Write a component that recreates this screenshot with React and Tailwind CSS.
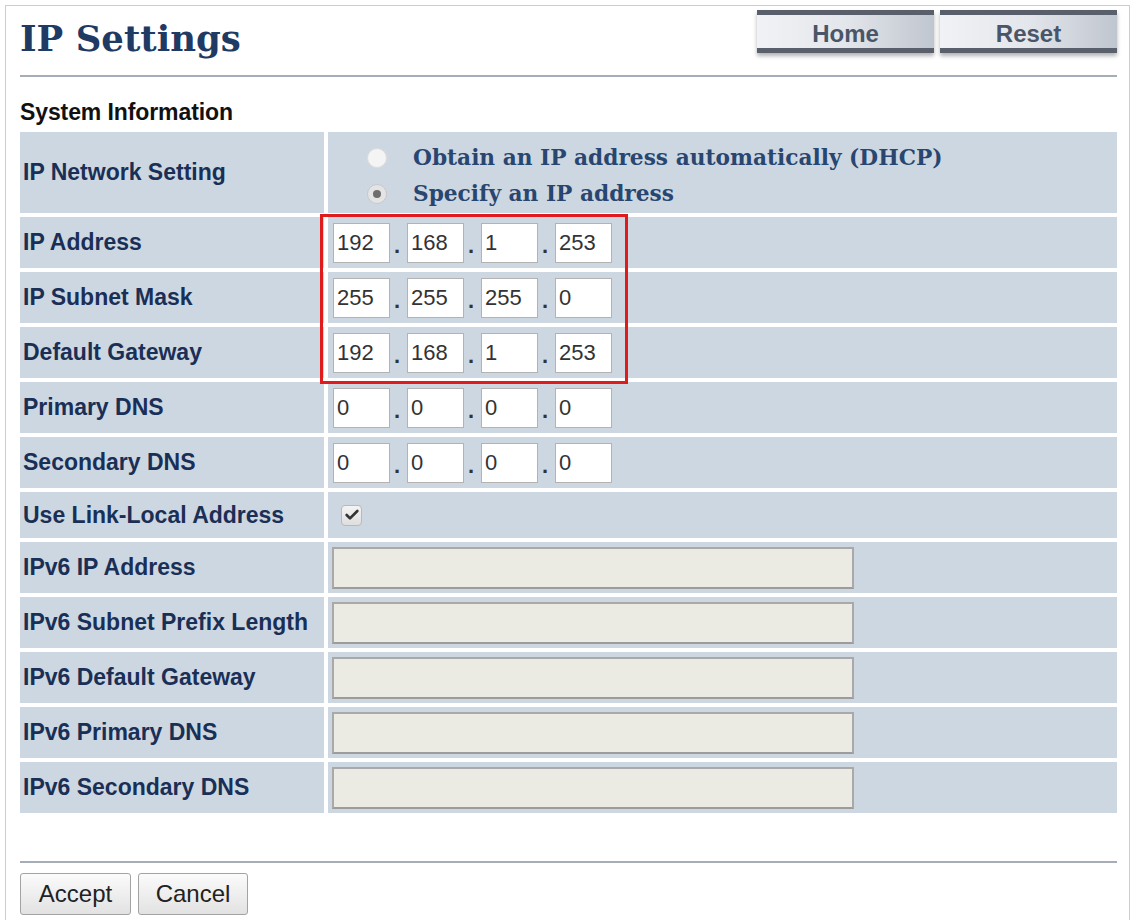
import { Check } from 'lucide-react'

const ipRows = [
  { label: 'IP Address', parts: ['192', '168', '1', '253'] },
  { label: 'IP Subnet Mask', parts: ['255', '255', '255', '0'] },
  { label: 'Default Gateway', parts: ['192', '168', '1', '253'] },
  { label: 'Primary DNS', parts: ['0', '0', '0', '0'] },
  { label: 'Secondary DNS', parts: ['0', '0', '0', '0'] },
]

const v6Rows = ['IPv6 IP Address', 'IPv6 Subnet Prefix Length', 'IPv6 Default Gateway', 'IPv6 Primary DNS', 'IPv6 Secondary DNS']

function Label({ children, tall }) {
  return (
    <div className={'flex items-center bg-[#cdd7e1] pl-[3px] text-[23px] font-bold text-[#1a2f56] ' + (tall || 'h-[51px]')}>
      {children}
    </div>
  )
}

function TabButton({ children }) {
  return (
    <div className="flex h-[43px] w-[177px] flex-col shadow-[0_3px_4px_rgba(0,0,0,0.3)]">
      <div className="h-[5px] shrink-0 bg-[#59606b]" />
      <div className="flex min-h-0 flex-1 items-center justify-center bg-gradient-to-r from-[#f1f2f5] via-[#e3e6eb] to-[#c0c6cf] pt-[5px] text-[24px] font-bold leading-none text-[#4a5567]">
        {children}
      </div>
      <div className="h-[5px] shrink-0 bg-[#59606b]" />
    </div>
  )
}

function Octet({ value }) {
  return (
    <div className="flex h-[40px] w-[57px] items-center border border-[#b3b3b3] bg-white pl-[3px] text-[22px] text-[#333]">
      {value}
    </div>
  )
}

function IpField({ parts }) {
  return (
    <div className="flex items-center">
      {parts.map((p, i) => (
        <div key={i} className="flex items-center">
          {i > 0 && <div className="flex h-[40px] w-[17px] items-end justify-start pb-[6px] pl-[4px] text-[22px] font-bold leading-none text-[#333]">.</div>}
          <Octet value={p} />
        </div>
      ))}
    </div>
  )
}

function Radio({ on }) {
  return (
    <div className={'flex h-[20px] w-[20px] items-center justify-center rounded-full border ' + (on ? 'border-[#c9c9c9] bg-[#e4e4e4]' : 'border-[#dcdcdc] bg-[#f4f4f4]')}>
      {on && <div className="h-[8px] w-[8px] rounded-full bg-[#6e6e6e]" />}
    </div>
  )
}

export default function App() {
  return (
    <div className="h-[920px] w-[1131px] overflow-hidden bg-white font-['Liberation_Sans',Arial,sans-serif]">
      <div className="relative ml-[5px] mt-[5px] h-[915px] w-[1125px] border-l border-r border-t border-[#c6cfd9] pl-[14px] pr-[12px]">
        {/* header */}
        <div className="flex h-[69px] items-start justify-between">
          <div className="pt-[13px] font-['DejaVu_Serif',serif] text-[35.5px] font-bold leading-[40px] text-[#1f3a63]">IP Settings</div>
          <div className="flex gap-[6px] pt-[4px]">
            <TabButton>Home</TabButton>
            <TabButton>Reset</TabButton>
          </div>
        </div>
        <div className="h-[2px] bg-[#a5aeb8]" />

        <div className="h-[55px] pt-[22px] text-[23px] font-bold leading-[26px] tracking-[-0.1px] text-[#111]">System Information</div>

        <div className="grid grid-cols-[304px_1fr] gap-[4px]">
          <Label tall="h-[81px]">IP Network Setting</Label>
          <div className="flex h-[81px] flex-col justify-center gap-[16px] bg-[#cdd7e1] pl-[39px] pt-[6px] font-['DejaVu_Serif',serif] text-[21.7px] font-bold leading-[20px] text-[#284670]">
            <div className="flex items-center gap-[26px]"><Radio /><span>Obtain an IP address automatically (DHCP)</span></div>
            <div className="flex items-center gap-[26px]"><Radio on /><span>Specify an IP address</span></div>
          </div>

          {ipRows.map(r => (
            <div key={r.label} className="contents">
              <Label>{r.label}</Label>
              <div className="flex h-[51px] items-center bg-[#cdd7e1] pl-[5px]">
                <IpField parts={r.parts} />
              </div>
            </div>
          ))}

          <Label tall="h-[46px]">Use Link-Local Address</Label>
          <div className="flex h-[46px] items-center bg-[#cdd7e1] pl-[13px]">
            <div className="flex h-[21px] w-[21px] items-center justify-center rounded-[4px] border border-[#b9b9b9] bg-gradient-to-b from-[#f4f4f4] to-[#dedede]">
              <Check size={16} strokeWidth={4} className="text-[#333]" />
            </div>
          </div>

          {v6Rows.map(l => (
            <div key={l} className="contents">
              <Label>{l}</Label>
              <div className="flex h-[51px] items-center bg-[#cdd7e1] pl-[4px]">
                <div className="h-[42px] w-[522px] border-2 border-[#a9a9a9] border-b-[#9c9c9c] bg-[#ebebe4]" />
              </div>
            </div>
          ))}
        </div>

        <div className="mt-[48px] h-[2px] bg-[#a5aeb8]" />
        <div className="mt-[10px] flex gap-[7px]">
          <button className="h-[42px] w-[111px] rounded-[3px] border border-[#a3a3a3] bg-gradient-to-b from-[#fbfbfb] to-[#e2e2e2] text-[24px] text-[#222]">Accept</button>
          <button className="h-[42px] w-[110px] rounded-[3px] border border-[#a3a3a3] bg-gradient-to-b from-[#fbfbfb] to-[#e2e2e2] text-[24px] text-[#222]">Cancel</button>
        </div>

        {/* annotation box over the IP fields */}
        <div className="absolute left-[314px] top-[208px] h-[170px] w-[308px] border-[3px] border-[#e01b1b]" />
      </div>
    </div>
  )
}
